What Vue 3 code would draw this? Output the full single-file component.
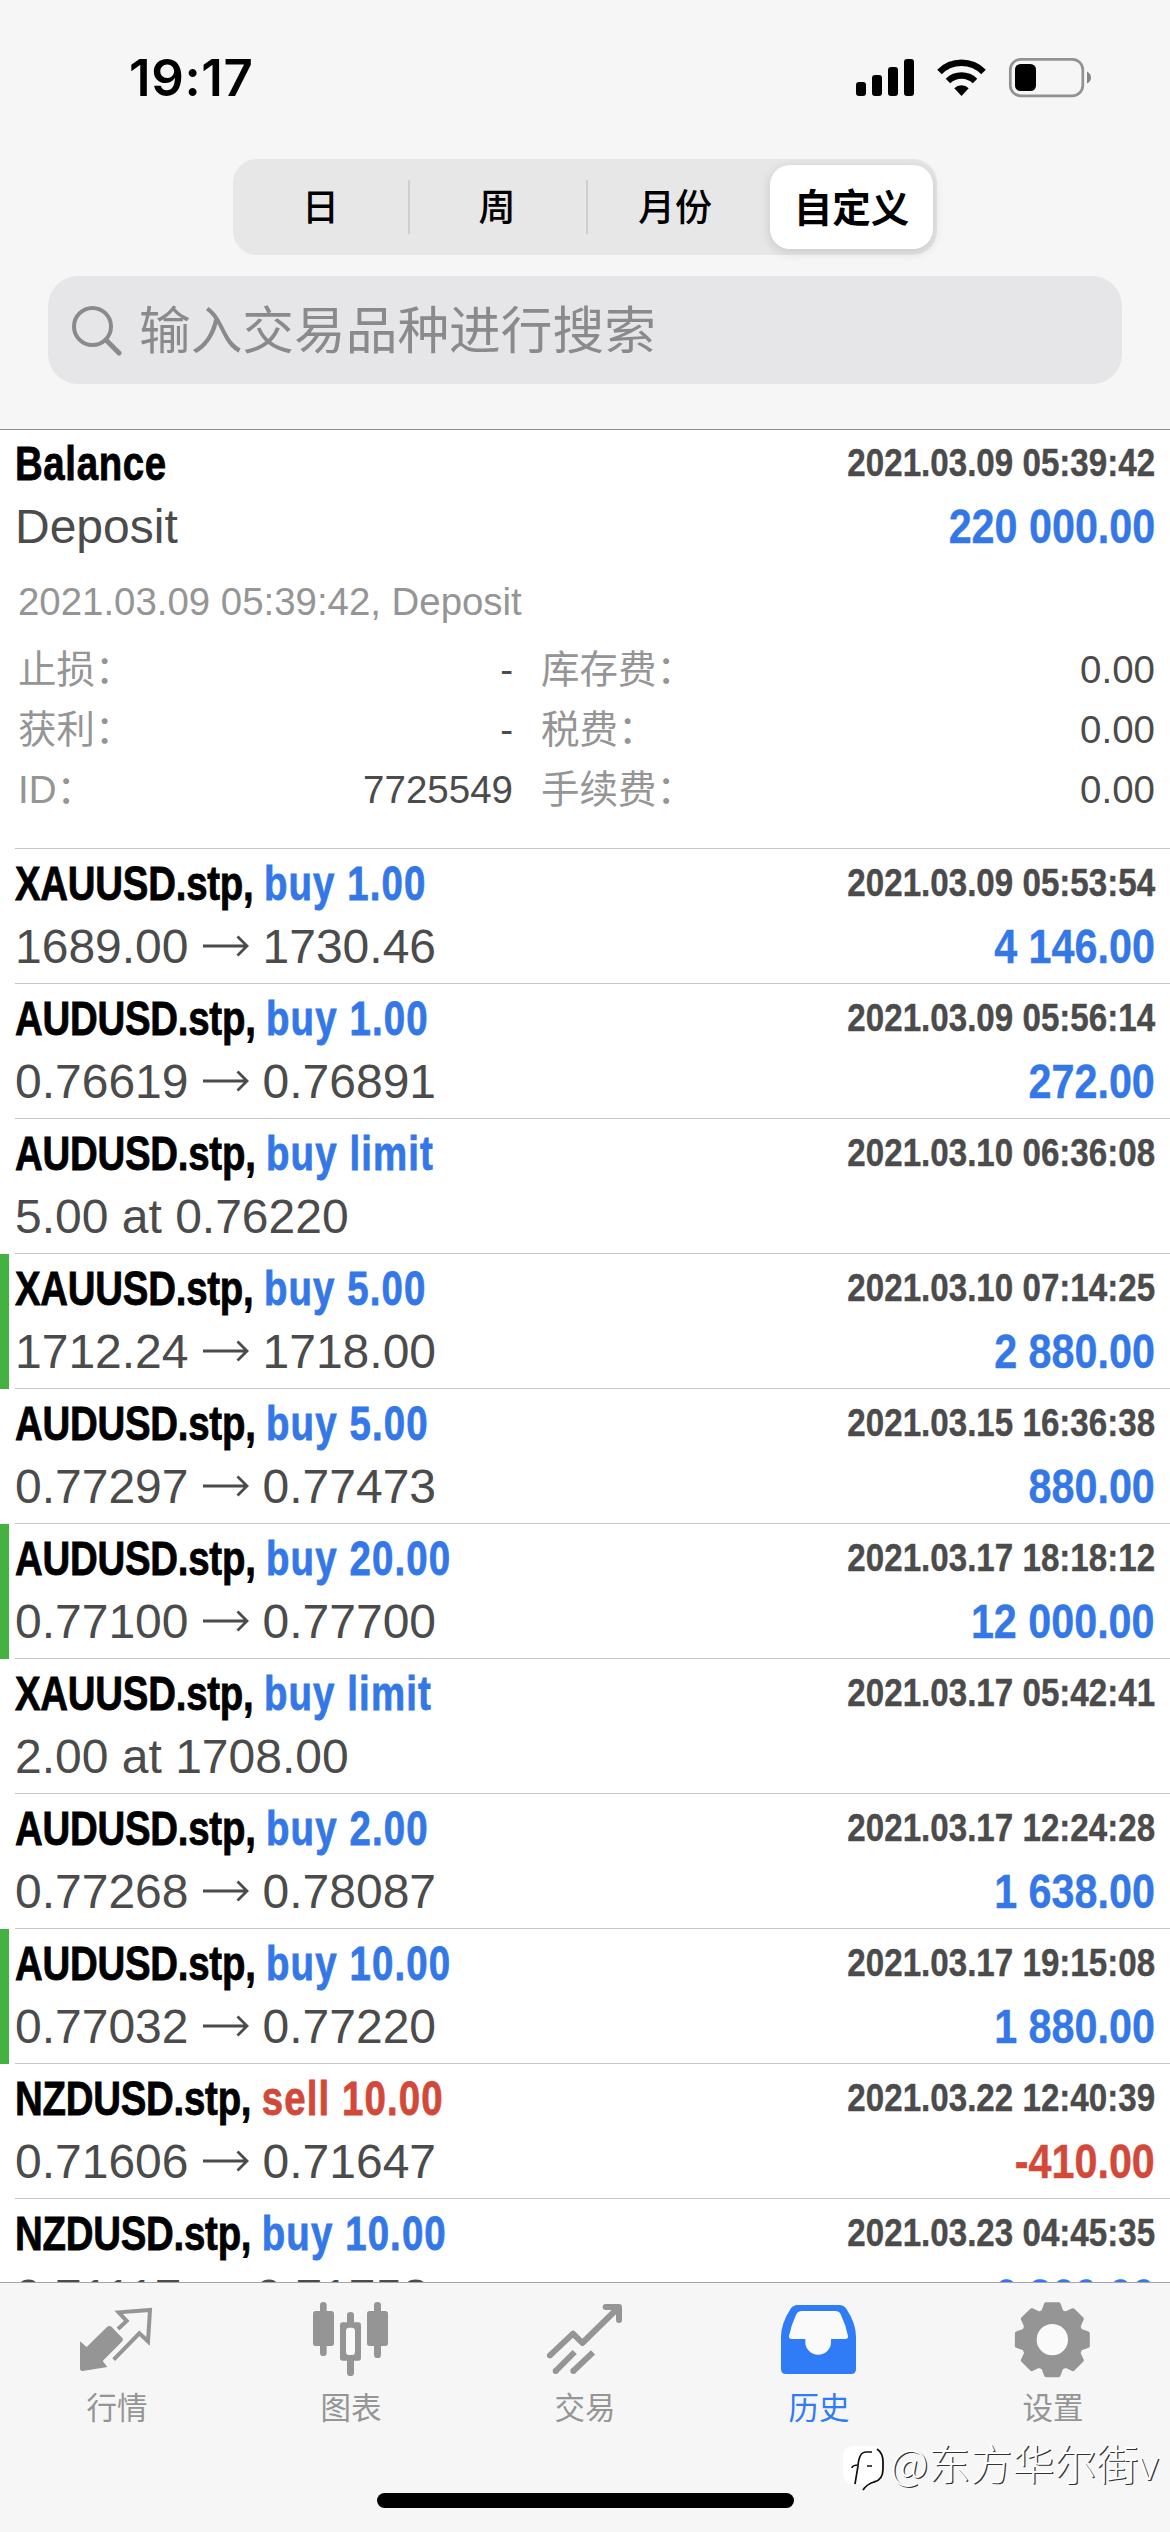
<script setup>
const periods = ['日', '周', '月份', '自定义']

const details = [
  ['止损：', '-', '库存费：', '0.00'],
  ['获利：', '-', '税费：', '0.00'],
  ['ID：', '7725549', '手续费：', '0.00'],
]

const deals = [
  { symbol: 'XAUUSD.stp,', op: 'buy 1.00', time: '2021.03.09 05:53:54', from: '1689.00', to: '1730.46', profit: '4 146.00' },
  { symbol: 'AUDUSD.stp,', op: 'buy 1.00', time: '2021.03.09 05:56:14', from: '0.76619', to: '0.76891', profit: '272.00' },
  { symbol: 'AUDUSD.stp,', op: 'buy limit', time: '2021.03.10 06:36:08', note: '5.00 at 0.76220' },
  { symbol: 'XAUUSD.stp,', op: 'buy 5.00', time: '2021.03.10 07:14:25', from: '1712.24', to: '1718.00', profit: '2 880.00', marked: true },
  { symbol: 'AUDUSD.stp,', op: 'buy 5.00', time: '2021.03.15 16:36:38', from: '0.77297', to: '0.77473', profit: '880.00' },
  { symbol: 'AUDUSD.stp,', op: 'buy 20.00', time: '2021.03.17 18:18:12', from: '0.77100', to: '0.77700', profit: '12 000.00', marked: true },
  { symbol: 'XAUUSD.stp,', op: 'buy limit', time: '2021.03.17 05:42:41', note: '2.00 at 1708.00' },
  { symbol: 'AUDUSD.stp,', op: 'buy 2.00', time: '2021.03.17 12:24:28', from: '0.77268', to: '0.78087', profit: '1 638.00' },
  { symbol: 'AUDUSD.stp,', op: 'buy 10.00', time: '2021.03.17 19:15:08', from: '0.77032', to: '0.77220', profit: '1 880.00', marked: true },
  { symbol: 'NZDUSD.stp,', op: 'sell 10.00', time: '2021.03.22 12:40:39', from: '0.71606', to: '0.71647', profit: '-410.00', loss: true },
  { symbol: 'NZDUSD.stp,', op: 'buy 10.00', time: '2021.03.23 04:45:35', from: '0.71117', to: '0.71753', profit: '6 360.00' },
]

// Eight-toothed outline around (667, 179)
const gear = Array.from({ length: 8 }, (_, i) =>
  [[-18, 88], [-10, 108], [10, 108], [18, 88]].map(([deg, r]) => {
    const a = ((i * 45 + deg) * Math.PI) / 180
    return `${(667 + r * Math.sin(a)).toFixed(1)},${(179 - r * Math.cos(a)).toFixed(1)}`
  }).join(' ')
).join(' ')
</script>

<template>
  <div class="screen">
    <header class="top">
      <div class="status">
        <span class="clock">19:17</span>
        <svg class="status-icons" viewBox="0 0 300 80" width="300" height="80">
          <rect x="36" y="42" width="10" height="14" rx="3" />
          <rect x="52" y="35" width="10" height="21" rx="3" />
          <rect x="68" y="27" width="10" height="29" rx="3" />
          <rect x="84" y="19" width="10" height="37" rx="3" />
          <path d="M119.500 32 A31 31 0 0 1 163.500 32" fill="none" stroke="#000" stroke-width="6.500" />
          <path d="M128 41 A19.500 19.500 0 0 1 155 41" fill="none" stroke="#000" stroke-width="6.500" />
          <path d="M134.300 48.300 A10 10 0 0 1 148.700 48.300 L141.500 56 Z" />
          <rect x="190.300" y="19.300" width="72.500" height="36.500" rx="10.500" fill="none" stroke="#929292" stroke-width="2.700" />
          <rect x="195" y="24" width="21" height="27" rx="5.500" />
          <path d="M267 31.500 Q271 33.500 271 37.500 Q271 41.500 267 43.500 Z" fill="#858585" />
        </svg>
      </div>
      <nav class="segments">
        <span v-for="(p, i) in periods" :key="p" class="segment" :class="{ active: i === 3, ruled: i > 0 && i < 3 }">{{ p }}</span>
      </nav>
      <div class="search">
        <svg viewBox="0 0 50 50" width="50" height="50">
          <circle cx="20.500" cy="20.500" r="18.500" fill="none" stroke="#8a8a8d" stroke-width="4" />
          <path d="M34 34 L47 47" stroke="#8a8a8d" stroke-width="5" stroke-linecap="round" />
        </svg>
        <span>输入交易品种进行搜索</span>
      </div>
    </header>

    <main class="list">
      <section class="balance">
        <div class="line">
          <b class="title balance-title">Balance</b>
          <b class="time">2021.03.09 05:39:42</b>
        </div>
        <div class="line">
          <span class="price">Deposit</span>
          <b class="profit">220 000.00</b>
        </div>
        <div class="comment">2021.03.09 05:39:42, Deposit</div>
        <div v-for="d in details" :key="d[0]" class="detail">
          <span class="label">{{ d[0] }}</span>
          <span class="value">{{ d[1] }}</span>
          <span class="label second">{{ d[2] }}</span>
          <span class="value">{{ d[3] }}</span>
        </div>
      </section>

      <article v-for="d in deals" :key="d.time" class="deal" :class="{ marked: d.marked }">
        <div class="body">
          <div class="line">
            <b class="title"><span class="symbol">{{ d.symbol }}</span> <span class="op" :class="{ loss: d.loss }">{{ d.op }}</span></b>
            <b class="time">{{ d.time }}</b>
          </div>
          <div class="line">
            <span v-if="d.note" class="price">{{ d.note }}</span>
            <span v-else class="price">{{ d.from }}<svg class="arrow" viewBox="0 0 46 24" width="46" height="24"><path d="M0 12 H44 M34.500 2.500 L44 12 L34.500 21.500" fill="none" stroke="#4b4b4b" stroke-width="2.800" /></svg>{{ d.to }}</span>
            <b v-if="d.profit" class="profit" :class="{ loss: d.loss }">{{ d.profit }}</b>
          </div>
        </div>
      </article>
    </main>

    <footer class="tabs">
      <div class="tab">
        <svg viewBox="36 60 270 240" width="90" height="80">
          <path d="M60 184 L80 201 L141 141 Q148 135 155 141 L187 174 Q191 179 187 184 L128 243 L142 261 L68 273 Q60 274 60 265 Z" />
          <path d="M174 147 L200 123 L176 97 L270 90 L264 184 L238 160 L161 239" fill="none" stroke="currentColor" stroke-width="12" />
        </svg>
        <span>行情</span>
      </div>
      <div class="tab">
        <svg viewBox="738 60 270 240" width="90" height="80">
          <rect x="759" y="93" width="63" height="105" rx="8" />
          <rect x="780" y="66" width="20" height="162" rx="10" />
          <rect x="921" y="93" width="63" height="105" rx="8" />
          <rect x="942" y="66" width="21" height="168" rx="10" />
          <path d="M861 127 V106 Q861 96 871.500 96 Q882 96 882 106 V127 H895 Q903 127 903 135 V234 Q903 242 895 242 H882 V278 Q882 288 871.500 288 Q861 288 861 278 V242 H848 Q840 242 840 234 V135 Q840 127 848 127 Z" />
          <rect x="858" y="143" width="27" height="82" rx="10" fill="#f9f9f9" />
        </svg>
        <span>图表</span>
      </div>
      <div class="tab">
        <svg viewBox="60 60 270 240" width="90" height="80">
          <g fill="none" stroke="currentColor" stroke-width="18" stroke-linecap="round" stroke-linejoin="round">
            <path d="M90 226 L159 161 L187 189 L294 84" />
            <path d="M257 81 H297 V120" />
          </g>
          <circle cx="107" cy="273" r="9" />
          <circle cx="160" cy="273" r="9" />
          <path d="M107 273 L164 216 M160 273 L219 217" fill="none" stroke="currentColor" stroke-width="18" />
        </svg>
        <span>交易</span>
      </div>
      <div class="tab current">
        <svg viewBox="762 60 270 240" width="90" height="80">
          <path d="M832 75 H958 Q971 75 979 86 Q1008 130 1008 170 V267 Q1008 282 993 282 H798 Q783 282 783 267 V170 Q783 130 812 86 Q820 75 832 75 Z" />
          <path d="M846 93 H946 Q957 93 962 103 Q978 136 984 168 Q985 177 976 177 H933 V186 A38.500 38.500 0 0 1 856 186 V177 H815 Q806 177 807 168 Q813 136 829 103 Q834 93 846 93 Z" fill="#fafafa" />
        </svg>
        <span>历史</span>
      </div>
      <div class="tab">
        <svg viewBox="534 60 270 240" width="90" height="80">
          <polygon :points="gear" stroke="currentColor" stroke-width="12" stroke-linejoin="round" />
          <circle cx="667" cy="179" r="47" fill="#fafafa" />
        </svg>
        <span>设置</span>
      </div>
      <div class="home-bar"></div>
      <div class="watermark">
        <svg viewBox="0 0 46 50" width="46" height="50">
          <path d="M12 4 H30 Q42 4 42 16 V30 Q42 40 30 42 L22 47 L22 42 H12 Q1 42 1 30 V16 Q1 4 12 4 Z" fill="#fff" />
          <path d="M35 7 Q41 11 41 20 V27 Q41 38 32 40 Q25 42 21 48" fill="none" stroke="#111" stroke-width="1.800" />
          <path d="M13 42 L16 24 Q17 10 24 10 H30 M10 26 Q10 23 17 23 M25 24 H30" fill="none" stroke="#111" stroke-width="1.700" />
        </svg>
        <span>@东方华尔街v</span>
      </div>
    </footer>
  </div>
</template>

<style>
body {
  margin: 0;
  overflow: hidden;
}
</style>

<style scoped>
.screen {
  width: 1170px;
  height: 2532px;
  display: flex;
  flex-direction: column;
  overflow: hidden;
  background: #fff;
  font-family: "Liberation Sans", "Noto Sans CJK SC", sans-serif;
}

.top {
  flex: none;
  height: 430px;
  box-sizing: border-box;
  background: #f6f6f6;
  border-bottom: 1px solid #8e8e8e;
}

.status {
  height: 159px;
  display: flex;
  justify-content: space-between;
  padding: 0 50px 0 129px;
}

.clock {
  padding-top: 48px;
  font: 600 51px/60px Inter, sans-serif;
  letter-spacing: 0.6px;
}

.status-icons {
  margin-top: 40px;
}

.segments {
  width: 704px;
  height: 96px;
  margin: 0 auto;
  box-sizing: border-box;
  padding: 6px 4px 6px 0;
  display: flex;
  align-items: center;
  border-radius: 24px;
  background: #e7e7e8;
}

.segment {
  box-sizing: border-box;
  width: 178px;
  height: 54px;
  line-height: 51px;
  text-align: center;
  font-size: 37px;
  font-weight: 500;
  font-family: "Noto Sans CJK SC", sans-serif;
  border-left: 2px solid transparent;
  padding-right: 2px;
}

.segment:first-child {
  width: 175px;
}

.segment.ruled {
  border-left-color: #cfcfd2;
}

.segment.active {
  width: 163px;
  height: 84px;
  margin-left: auto;
  padding: 0;
  border: 0;
  line-height: 81px;
  font-size: 38.5px;
  font-weight: 700;
  border-radius: 20px;
  background: #fff;
  box-shadow: 0 3px 12px rgba(0, 0, 0, 0.14);
}

.search {
  height: 108px;
  margin: 21px 48px 0;
  box-sizing: border-box;
  padding: 2px 23px 0 24px;
  display: flex;
  align-items: center;
  gap: 17px;
  border-radius: 30px;
  background: #e6e6e8;
  color: #8a8a8d;
  font-size: 51.7px;
  line-height: 106px;
}

.list {
  flex: none;
  height: 1852px;
  overflow: hidden;
}

.balance {
  height: 419px;
  box-sizing: border-box;
  margin-left: 15px;
  padding-top: 2px;
  border-bottom: 1px solid #c6c6c8;
}

.line {
  height: 63px;
  display: flex;
  justify-content: space-between;
  align-items: flex-start;
  padding-right: 15px;
  white-space: nowrap;
  font-size: 48px;
  line-height: 63px;
}

.title {
  transform: scaleX(0.8);
  transform-origin: left;
  color: #000;
  letter-spacing: -0.3px;
  -webkit-text-stroke: 0.8px currentColor;
}

.balance-title {
  letter-spacing: 0.8px;
}

.op {
  color: #3478e8;
  letter-spacing: 1.4px;
}

.time {
  transform: scaleX(0.85);
  transform-origin: right;
  color: #4b4b4b;
  font-size: 39px;
  line-height: 61px;
  -webkit-text-stroke: 0.4px currentColor;
}

.price {
  color: #4b4b4b;
}

.profit {
  transform: scaleX(0.86);
  transform-origin: right;
  color: #3478e8;
  -webkit-text-stroke: 0.4px currentColor;
}

.op.loss,
.profit.loss {
  color: #d2493a;
}

.arrow {
  margin: 0 14px;
  vertical-align: 5px;
}

.comment {
  height: 80px;
  padding-left: 3px;
  color: #959595;
  font-size: 38.4px;
  line-height: 87px;
}

.detail {
  height: 60px;
  display: grid;
  grid-template-columns: 200px 295px 200px 1fr;
  align-items: center;
  padding: 0 15px 0 3px;
  font-size: 38.5px;
  line-height: 64px;
  white-space: nowrap;
}

.label,
.value {
  height: 60px;
}

.label {
  color: #959595;
}

.second {
  padding-left: 28px;
}

.value {
  color: #4b4b4b;
  text-align: right;
}

.deal {
  height: 135px;
  box-sizing: border-box;
  border-left: 9px solid transparent;
}

.deal.marked {
  border-left-color: #43b240;
}

.body {
  height: 135px;
  box-sizing: border-box;
  margin-left: 6px;
  padding-top: 3px;
  border-bottom: 1px solid #c6c6c8;
}

.tabs {
  position: relative;
  flex: none;
  height: 250px;
  box-sizing: border-box;
  border-top: 1px solid #a6a6a8;
  background: #f6f6f6;
  display: flex;
}

.tab {
  width: 234px;
  padding-top: 17px;
  display: flex;
  flex-direction: column;
  align-items: center;
  color: #959595;
  font-size: 30.5px;
  line-height: 56px;
}

.tab svg {
  fill: currentColor;
}

.tab.current {
  color: #2f7cf6;
}

.home-bar {
  position: absolute;
  left: 377px;
  top: 210px;
  width: 417px;
  height: 15px;
  border-radius: 8px;
  background: #000;
}

.watermark {
  position: absolute;
  left: 842px;
  top: 159px;
  display: flex;
  align-items: center;
  gap: 2px;
  color: #fff;
  font-family: "Noto Sans CJK SC", sans-serif;
  font-size: 42px;
  font-weight: 300;
  line-height: 42px;
  white-space: nowrap;
  text-shadow: 1.2px 1.2px 0 #333;
}

.watermark span {
  margin-top: -10px;
}
</style>
